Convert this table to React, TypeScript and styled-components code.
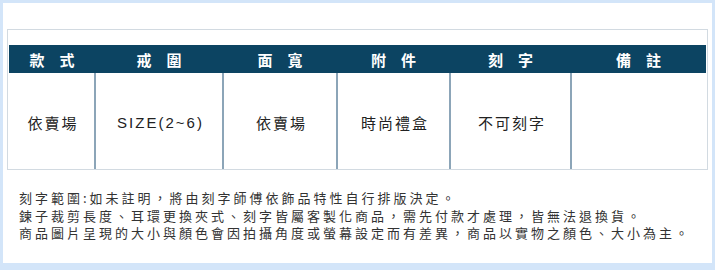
import styled, { createGlobalStyle } from "styled-components";

const GlobalStyle = createGlobalStyle`
  html, body {
    margin: 0;
    padding: 0;
    background-color: #d3e5f9;
  }
  body {
    font-family: "Liberation Sans", "Noto Sans CJK TC", sans-serif;
  }
`;

const Panel = styled.div`
  margin: 3px 3px 0 3px;
  height: 260px;
  background-color: #ffffff;
  padding: 26px 4px 0 4px;
  box-sizing: border-box;
`;

const Table = styled.div`
  border: 1px solid #d2dae1;
  padding: 15px 1px 0 1px;
`;

const Row = styled.div<{ head?: boolean }>`
  display: grid;
  grid-template-columns: 86px 128px 114px 113px 121px 1fr;
  height: ${(p) => (p.head ? "28px" : "96px")};
  background-color: ${(p) => (p.head ? "#0c4462" : "#ffffff")};
`;

const HeadCell = styled.div`
  display: flex;
  align-items: center;
  justify-content: center;
  color: #ffffff;
  font-size: 15px;
  font-weight: 700;
  letter-spacing: 15px;
  padding-left: 15px;
`;

const Cell = styled.div<{ first?: boolean }>`
  display: flex;
  align-items: center;
  justify-content: center;
  color: #222222;
  font-size: 15px;
  letter-spacing: 2px;
  padding-left: 2px;
  padding-top: 2px;
  border-left: ${(p) => (p.first ? "none" : "2px solid #8ca5b8")};
  margin-left: ${(p) => (p.first ? "0" : "-1px")};
`;

const Notes = styled.div`
  margin: 19px 0 0 12px;
  color: #333333;
  font-family: "Noto Sans CJK TC", sans-serif;
  font-size: 13px;
  line-height: 17.5px;
  letter-spacing: 3px;
`;

const heads = ["款式", "戒圍", "面寬", "附件", "刻字", "備註"];
const values = ["依賣場", "SIZE(2~6)", "依賣場", "時尚禮盒", "不可刻字", ""];
const notes = [
  "刻字範圍:如未註明，將由刻字師傅依飾品特性自行排版決定。",
  "鍊子裁剪長度、耳環更換夾式、刻字皆屬客製化商品，需先付款才處理，皆無法退換貨。",
  "商品圖片呈現的大小與顏色會因拍攝角度或螢幕設定而有差異，商品以實物之顏色、大小為主。",
];

export default function App() {
  return (
    <>
      <GlobalStyle />
      <Panel>
        <Table>
          <Row head>
            {heads.map((h) => (
              <HeadCell key={h}>{h}</HeadCell>
            ))}
          </Row>
          <Row>
            {values.map((v, i) => (
              <Cell key={i} first={i === 0}>
                {v}
              </Cell>
            ))}
          </Row>
        </Table>
        <Notes>
          {notes.map((n) => (
            <div key={n}>{n}</div>
          ))}
        </Notes>
      </Panel>
    </>
  );
}
